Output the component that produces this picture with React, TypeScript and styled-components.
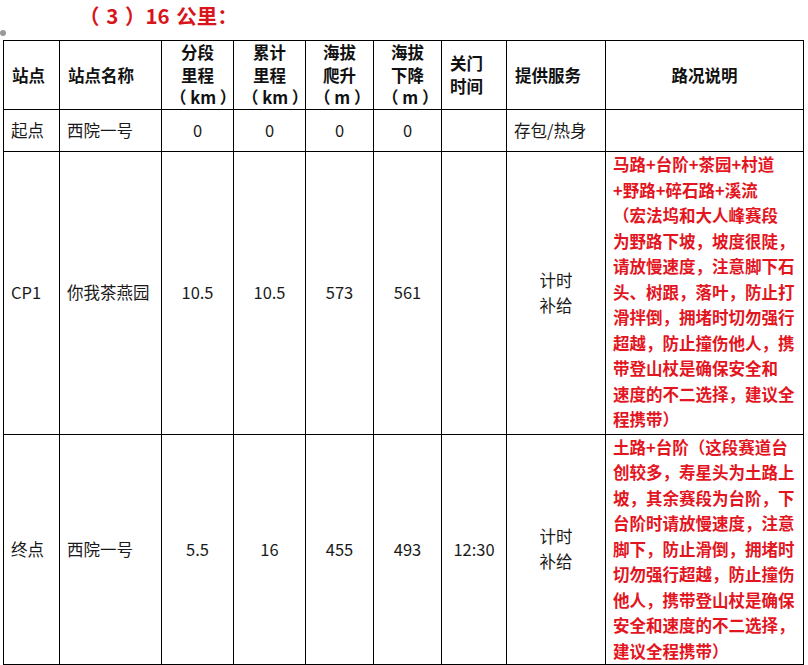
import React from "react";
import styled, { createGlobalStyle } from "styled-components";

const Global = createGlobalStyle`
  html, body { margin: 0; padding: 0; background: #ffffff; }
  body {
    font-family: "Noto Sans CJK SC", "Noto Sans", sans-serif;
    color: #111;
  }
`;

const Page = styled.div`
  position: relative;
  width: 808px;
  height: 665px;
  overflow: hidden;
  background: #fff;
`;

const Title = styled.div`
  height: 40px;
  box-sizing: border-box;
  padding-left: 79px;
  padding-top: 1px;
  font-size: 20.5px;
  line-height: 28px;
  font-weight: 700;
  color: #d8141c;
  white-space: pre;
  word-spacing: 2px;
`;

const Handle = styled.span`
  position: absolute;
  left: 0px;
  top: 30px;
  width: 6px;
  height: 6px;
  border-radius: 50%;
  background: #9a9a9a;
`;

const Table = styled.table`
  margin-left: 3px;
  width: 800px;
  table-layout: fixed;
  border-collapse: collapse;
  font-size: 16.5px;
`;

const Row = styled.tr<{ $h: number }>`
  height: ${(p) => p.$h}px;
`;

const HeadCell = styled.th<{ $align?: string }>`
  border: 1.5px solid #000;
  padding: 0 8px;
  font-weight: 700;
  line-height: 22.5px;
  color: #111;
  text-align: ${(p) => p.$align || "center"};
  vertical-align: middle;
  white-space: pre;
`;

const Cell = styled.td<{ $align?: string }>`
  border: 1.5px solid #000;
  padding: 0 7px;
  line-height: 25px;
  color: #1a1a1a;
  text-align: ${(p) => p.$align || "center"};
  vertical-align: middle;
`;

const NoteCell = styled.td`
  border: 1.5px solid #000;
  padding: 0 0 0 7px;
  font-weight: 700;
  font-size: 16.5px;
  line-height: 25.5px;
  color: #e3161f;
  text-align: left;
  vertical-align: middle;
  white-space: nowrap;
`;

const Line = styled.span`
  display: block;
`;

const cols = [56, 102, 72, 72, 68, 68, 65, 99, 198];

const cp1Notes = [
  "马路+台阶+茶园+村道",
  "+野路+碎石路+溪流",
  "（宏法坞和大人峰赛段",
  "为野路下坡，坡度很陡，",
  "请放慢速度，注意脚下石",
  "头、树跟，落叶，防止打",
  "滑拌倒，拥堵时切勿强行",
  "超越，防止撞伤他人，携",
  "带登山杖是确保安全和",
  "速度的不二选择，建议全",
  "程携带）",
];

const endNotes = [
  "土路+台阶（这段赛道台",
  "创较多，寿星头为土路上",
  "坡，其余赛段为台阶，下",
  "台阶时请放慢速度，注意",
  "脚下，防止滑倒，拥堵时",
  "切勿强行超越，防止撞伤",
  "他人，携带登山杖是确保",
  "安全和速度的不二选择，",
  "建议全程携带）",
];

const Lines = ({ items }: { items: string[] }) => (
  <>
    {items.map((t, i) => (
      <Line key={i}>{t}</Line>
    ))}
  </>
);

export default function App() {
  return (
    <Page>
      <Global />
      <Title>{"（ 3 ）16 公里："}</Title>
      <Handle />
      <Table>
        <colgroup>
          {cols.map((w, i) => (
            <col key={i} style={{ width: w }} />
          ))}
        </colgroup>
        <tbody>
          <Row $h={67}>
            <HeadCell $align="left">站点</HeadCell>
            <HeadCell $align="left">站点名称</HeadCell>
            <HeadCell>
              <Lines items={["分段", "里程", "（ km ）"]} />
            </HeadCell>
            <HeadCell>
              <Lines items={["累计", "里程", "（ km ）"]} />
            </HeadCell>
            <HeadCell>
              <Lines items={["海拔", "爬升", "（ m ）"]} />
            </HeadCell>
            <HeadCell>
              <Lines items={["海拔", "下降", "（ m ）"]} />
            </HeadCell>
            <HeadCell $align="left">
              <Lines items={["关门", "时间"]} />
            </HeadCell>
            <HeadCell $align="left">提供服务</HeadCell>
            <HeadCell>路况说明</HeadCell>
          </Row>
          <Row $h={42}>
            <Cell $align="left">起点</Cell>
            <Cell $align="left">西院一号</Cell>
            <Cell>0</Cell>
            <Cell>0</Cell>
            <Cell>0</Cell>
            <Cell>0</Cell>
            <Cell />
            <Cell $align="left">存包/热身</Cell>
            <NoteCell />
          </Row>
          <Row $h={283}>
            <Cell $align="left">CP1</Cell>
            <Cell $align="left">你我茶燕园</Cell>
            <Cell>10.5</Cell>
            <Cell>10.5</Cell>
            <Cell>573</Cell>
            <Cell>561</Cell>
            <Cell />
            <Cell>
              <Lines items={["计时", "补给"]} />
            </Cell>
            <NoteCell>
              <Lines items={cp1Notes} />
            </NoteCell>
          </Row>
          <Row $h={229}>
            <Cell $align="left">终点</Cell>
            <Cell $align="left">西院一号</Cell>
            <Cell>5.5</Cell>
            <Cell>16</Cell>
            <Cell>455</Cell>
            <Cell>493</Cell>
            <Cell>12:30</Cell>
            <Cell>
              <Lines items={["计时", "补给"]} />
            </Cell>
            <NoteCell>
              <Lines items={endNotes} />
            </NoteCell>
          </Row>
        </tbody>
      </Table>
    </Page>
  );
}
